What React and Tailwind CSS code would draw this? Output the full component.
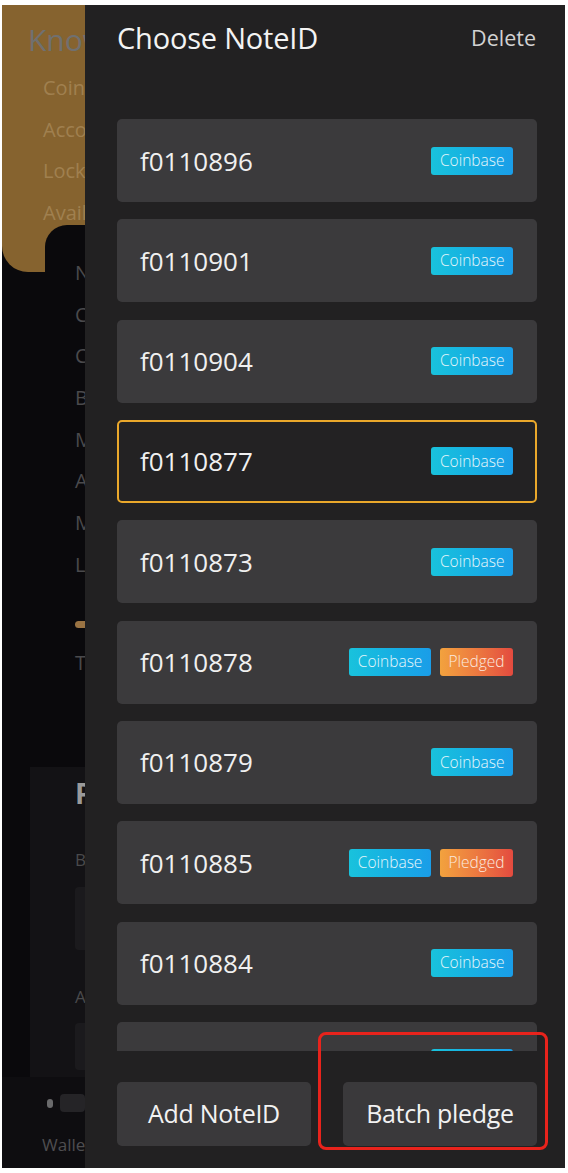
import React from "react";

const items = [
  { id: "f0110896", tags: ["c"] },
  { id: "f0110901", tags: ["c"] },
  { id: "f0110904", tags: ["c"] },
  { id: "f0110877", tags: ["c"], selected: true },
  { id: "f0110873", tags: ["c"] },
  { id: "f0110878", tags: ["c", "p"] },
  { id: "f0110879", tags: ["c"] },
  { id: "f0110885", tags: ["c", "p"] },
  { id: "f0110884", tags: ["c"] },
  { id: "f0110886", tags: ["c"] },
];

function Badge({ kind }) {
  if (kind === "p") {
    return (
      <span className="h-[28px] px-[8.5px] flex items-center rounded-[3px] bg-gradient-to-r from-[#f2a23e] to-[#e34a3f] text-[15.5px] font-light text-[#fbe9df] leading-none">
        Pledged
      </span>
    );
  }
  return (
    <span className="h-[28px] px-[8.5px] flex items-center rounded-[3px] bg-gradient-to-r from-[#19c2dc] to-[#1a9de8] text-[15.5px] font-light text-[#e6f6fb] leading-none">
      Coinbase
    </span>
  );
}

function LeftBackdrop() {
  const letters = ["Node", "Coin", "Cost", "Bal", "Miner", "Avail", "Mined", "Lock"];
  return (
    <div className="w-[83px] h-full overflow-hidden bg-[#0a090c] flex flex-col shrink-0">
      <div className="h-[267px] bg-[#86632f] rounded-bl-[26px] pl-[26px] pt-[15px] whitespace-nowrap">
        <div className="h-[40px] leading-[40px] text-[30px] text-[#707070]">Know</div>
        <div className="mt-[7px] pl-[15px] text-[20px] text-[#a0804f]">
          <div className="h-[41.7px] leading-[41.7px]">Coin</div>
          <div className="h-[41.7px] leading-[41.7px]">Acco</div>
          <div className="h-[41.7px] leading-[41.7px]">Lock</div>
          <div className="h-[41.7px] leading-[41.7px]">Avail</div>
        </div>
      </div>
      <div className="relative -mt-[47px] ml-[43px] h-[542px] bg-[#0a090c] rounded-tl-[22px] pl-[30px] pt-[27px] whitespace-nowrap">
        {letters.map((l) => (
          <div key={l} className="h-[41.7px] leading-[41.7px] text-[20px] text-[#4a4a4c]">
            {l}
          </div>
        ))}
        <div className="mt-[35px] h-[7px] w-[40px] rounded-full bg-[#9a7343]"></div>
        <div className="mt-[20px] h-[30px] leading-[30px] text-[20px] text-[#4a4a4c]">Total</div>
      </div>
      <div className="ml-[28px] h-[310px] bg-[#131215] pl-[45px] pt-[9px] whitespace-nowrap">
        <div className="h-[34px] leading-[34px] text-[28px] font-bold text-[#9a9a9a]">Pl</div>
        <div className="mt-[38px] h-[24px] leading-[24px] text-[17px] text-[#4a4a4c]">Bal</div>
        <div className="mt-[15px] h-[63px] w-[40px] rounded-l-[4px] bg-[#1b1a1d]"></div>
        <div className="mt-[35px] h-[24px] leading-[24px] text-[17px] text-[#4a4a4c]">Am</div>
        <div className="mt-[14px] h-[47px] w-[40px] rounded-l-[4px] bg-[#1b1a1d]"></div>
      </div>
      <div className="flex-1 bg-[#0e0d10] relative">
        <div className="flex items-center gap-[7px] pl-[45px] pt-[17px]">
          <div className="w-[9px] h-[9px] rounded-full bg-[#6a6a6c]"></div>
          <div className="w-[40px] h-[18px] rounded-[4px] bg-[#252427]"></div>
        </div>
        <div className="pl-[40px] mt-[21px] text-[17px] leading-[24px] text-[#4e4e50] whitespace-nowrap">Walle</div>
      </div>
    </div>
  );
}

export default function App() {
  return (
    <div
      className="w-[568px] h-[1173px] bg-white pt-[5px] pr-[3px] pb-[5px] pl-[2px] relative overflow-hidden"
      style={{ fontFamily: '"Open Sans", "Noto Sans", sans-serif' }}
    >
      <div className="flex h-full">
        <LeftBackdrop />
        <div className="flex-1 h-full bg-[#222122] flex flex-col pl-[32px] pr-[28px]">
          <div className="pt-[13px] h-[53px] flex items-start justify-between">
            <div className="h-[40px] leading-[40px] text-[29px] text-[#f3f3f3] tracking-[-0.2px]">Choose NoteID</div>
            <div className="h-[40px] leading-[40px] text-[21.5px] text-[#d2d2d2] mr-[1px]">Delete</div>
          </div>
          <div className="mt-[61px] h-[932px] overflow-hidden flex flex-col gap-[17.33px]">
            {items.map((it) => (
              <div
                key={it.id}
                className={
                  it.selected
                    ? "h-[83px] shrink-0 rounded-[5px] border-2 border-[#eaa82b] bg-[#232223] flex items-center justify-between pl-[21px] pr-[22px]"
                    : "h-[83px] shrink-0 rounded-[5px] bg-[#3b3a3c] flex items-center justify-between pl-[23px] pr-[24px]"
                }
              >
                <span className="text-[26px] leading-[36px] text-[#f0f0f0]">{it.id}</span>
                <div className="flex gap-[9px]">
                  {it.tags.map((t, i) => (
                    <Badge key={i} kind={t} />
                  ))}
                </div>
              </div>
            ))}
          </div>
          <div className="pt-[31px] flex justify-between">
            <button className="w-[194px] h-[64px] rounded-[5px] bg-[#3a393b] text-[25px] text-[#f2f2f2] tracking-[-0.3px]">
              Add NoteID
            </button>
            <button className="w-[194px] h-[64px] rounded-[5px] bg-[#3a393b] text-[25px] text-[#f2f2f2] tracking-[-0.3px]">
              Batch pledge
            </button>
          </div>
        </div>
      </div>
      <div className="absolute left-[318px] top-[1032px] w-[230px] h-[118px] border-[3px] border-[#e8231c] rounded-[8px] pointer-events-none"></div>
    </div>
  );
}
